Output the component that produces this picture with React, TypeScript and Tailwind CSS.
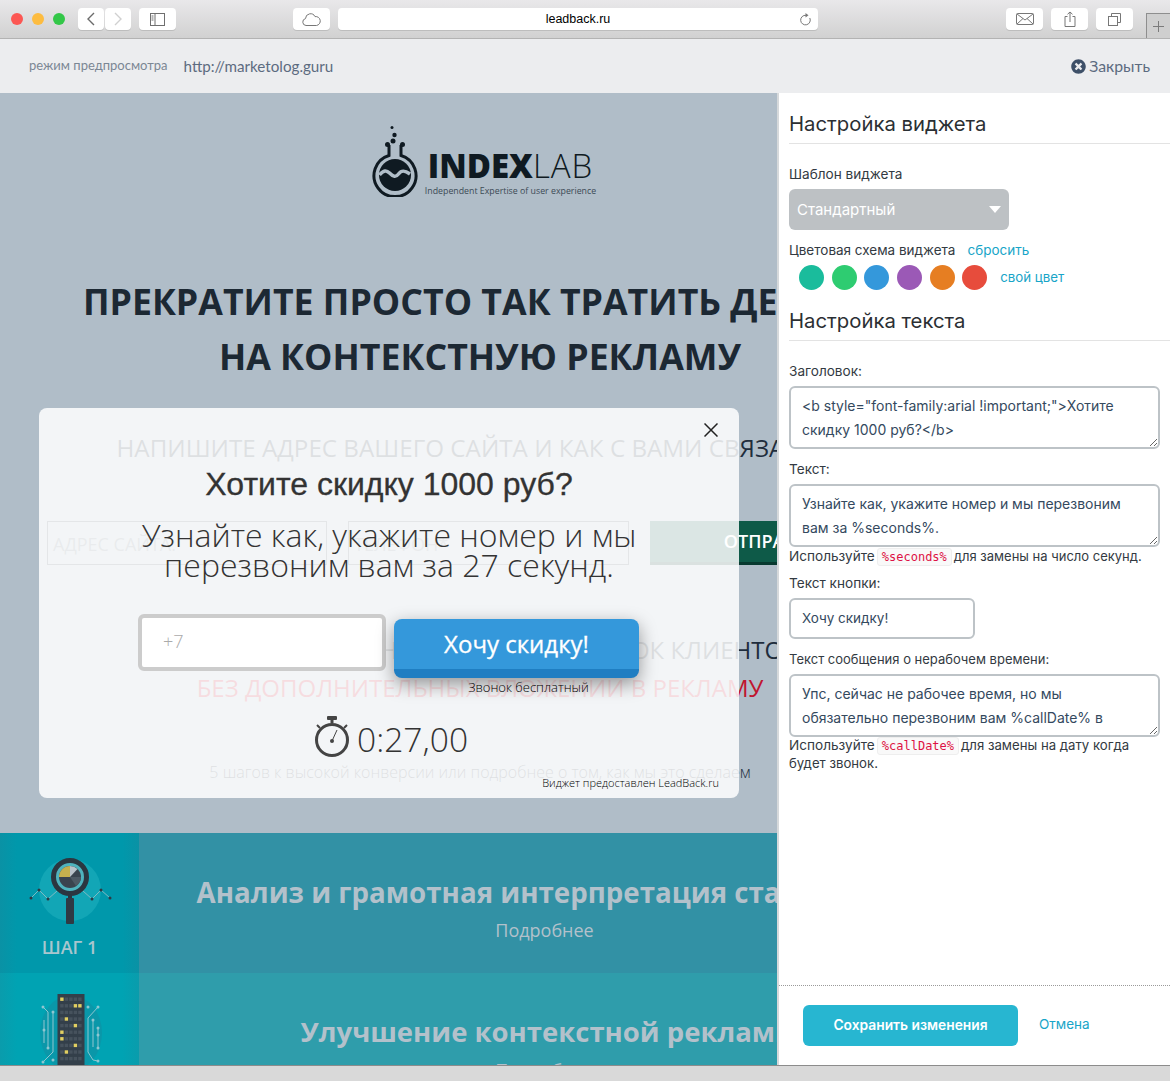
import { FaTimesCircle } from "react-icons/fa";

const swatches = ["bg-[#1abc9c]", "bg-[#2ecc71]", "bg-[#3498db]", "bg-[#9b59b6]", "bg-[#e67e22]", "bg-[#e74c3c]"];

function ToolButton({ className, children }: any) {
  return (
    <div className={`h-[22px] flex items-center justify-center bg-white rounded-[4px] shadow-[0_1px_0_#bdbdbd] ${className}`}>
      {children}
    </div>
  );
}

function Toolbar() {
  return (
    <div className="relative h-[39px] shrink-0 flex items-start pt-[8px] border-b border-[#b3b3b3] bg-gradient-to-b from-[#e9e8ea] to-[#d1d1d1]">
      <div className="flex gap-[9px] ml-[11px] mt-[5px] mr-[13px]">
        <div className="w-[12px] h-[12px] rounded-full bg-[#fc5753]" />
        <div className="w-[12px] h-[12px] rounded-full bg-[#fdbc40]" />
        <div className="w-[12px] h-[12px] rounded-full bg-[#33c748]" />
      </div>
      <ToolButton className="w-[26px]">
        <svg width="10" height="14" viewBox="0 0 10 14" fill="none" stroke="#6b6b6b" strokeWidth="1.4">
          <path d="M8 1L2 7l6 6" />
        </svg>
      </ToolButton>
      <ToolButton className="w-[26px] ml-[1px]">
        <svg width="10" height="14" viewBox="0 0 10 14" fill="none" stroke="#d0d0d0" strokeWidth="1.4">
          <path d="M2 1l6 6-6 6" />
        </svg>
      </ToolButton>
      <ToolButton className="w-[37px] ml-[8px]">
        <svg width="15" height="13" viewBox="0 0 15 13" fill="none" stroke="#6f6f6f">
          <rect x="0.5" y="0.5" width="14" height="12" />
          <path d="M5 0.5v12M1.5 3h2M1.5 5h2M1.5 7h2" />
        </svg>
      </ToolButton>
      <ToolButton className="w-[37px] ml-[117px]">
        <svg width="19" height="13" viewBox="0 0 19 13" fill="none" stroke="#777">
          <path d="M5 12.5H4a3.5 3.5 0 0 1-.5-6.9A5 5 0 0 1 13 3.6a4.5 4.5 0 0 1 1.5 8.9z" />
        </svg>
      </ToolButton>
      <ToolButton className="w-[480px] ml-[8px] relative">
        <span className="font-['Liberation_Sans',sans-serif] text-[12.5px] text-black">leadback.ru</span>
        <svg className="absolute right-[7px] top-[5px]" width="12" height="13" viewBox="0 0 12 13" fill="none" stroke="#777">
          <path d="M7 2.3a4.8 4.8 0 1 0 3.8 2.7" />
          <path d="M6.5 0l3 2.3-3 2.2z" fill="#777" stroke="none" />
        </svg>
      </ToolButton>
      <ToolButton className="w-[37px] ml-[188px]">
        <svg width="18" height="12" viewBox="0 0 18 12" fill="none" stroke="#777">
          <rect x="0.5" y="0.5" width="17" height="11" rx="1" />
          <path d="M1 1l8 6 8-6M1 11l6-5.5M17 11l-6-5.5" />
        </svg>
      </ToolButton>
      <ToolButton className="w-[37px] ml-[8px]">
        <svg width="12" height="16" viewBox="0 0 12 16" fill="none" stroke="#777">
          <path d="M3.5 5.5H1v10h10v-10H8.5M6 11V1M3.5 3.3L6 1l2.5 2.3" />
        </svg>
      </ToolButton>
      <ToolButton className="w-[37px] ml-[8px]">
        <svg width="13" height="13" viewBox="0 0 13 13" fill="none" stroke="#777">
          <rect x="0.5" y="3.5" width="9" height="9" />
          <path d="M3.5 3.5v-3h9v9h-3" />
        </svg>
      </ToolButton>
      <div className="absolute right-0 bottom-0 w-[24px] h-[25px] border-l border-t border-[#8e8e8e] bg-[#cfcfcf] flex items-center justify-center">
        <svg width="11" height="11" viewBox="0 0 11 11" stroke="#7b7b7b">
          <path d="M5.5 0v11M0 5.5h11" />
        </svg>
      </div>
    </div>
  );
}

function PreviewBar() {
  return (
    <div className="h-[54px] shrink-0 flex items-center bg-[#ecedef] px-[20px] font-['Lato',sans-serif]">
      <span className="ml-[9px] text-[13px] text-[#7b8794]">режим предпросмотра</span>
      <span className="ml-[16px] text-[15.2px] text-[#5c6b80]">http://marketolog.guru</span>
      <div className="ml-auto flex items-center gap-[3px] text-[15.8px] text-[#5c6b80]">
        <FaTimesCircle className="text-[15px] text-[#3e5068]" />
        Закрыть
      </div>
    </div>
  );
}

function Logo() {
  return (
    <div className="flex items-end justify-center h-[72px] ml-[8px]">
      <svg width="46" height="72" viewBox="0 0 46 72" fill="none" className="mr-[7px]">
        <circle cx="20" cy="2.5" r="1.5" fill="#0f1a22" />
        <circle cx="22.5" cy="10" r="2.2" fill="#0f1a22" />
        <circle cx="21" cy="16" r="2.5" fill="#0f1a22" />
        <path d="M17 20v10.5a21 21 0 1 0 12 0V20" stroke="#0f1a22" strokeWidth="3" />
        <circle cx="15.5" cy="19.5" r="2.5" fill="#0f1a22" />
        <circle cx="30.5" cy="19.5" r="2.5" fill="#0f1a22" />
        <circle cx="23" cy="50" r="16" fill="#0f1a22" />
        <path d="M7.5 50c4-5 7-5 10-2s6 5 9 1 6-4 11.5 0" stroke="#b0bdc8" strokeWidth="3.5" />
      </svg>
      <div className="font-['Open_Sans',sans-serif] text-[#0f1a22]">
        <div className="text-[33px] leading-[36px] font-extrabold mb-[1px]">
          INDEX<span className="font-light tracking-[1px]">LAB</span>
        </div>
        <div className="text-[8.8px] leading-[12px] text-[#3c4a55]">Independent Expertise of user experience</div>
      </div>
    </div>
  );
}

function StepOneIcon() {
  return (
    <svg width="139" height="100" viewBox="0 0 139 100" fill="none">
      <circle cx="70" cy="57" r="31" fill="#12a6b6" />
      <path d="M31 65l8-8 9 9 9-8M83 58l9 8 9-9 9 8" stroke="#7fb9c2" />
      <g fill="#2f3a44">
        <circle cx="31" cy="65" r="1.5" />
        <circle cx="39" cy="57" r="1.5" />
        <circle cx="48" cy="66" r="1.5" />
        <circle cx="92" cy="66" r="1.5" />
        <circle cx="101" cy="57" r="1.5" />
        <circle cx="110" cy="65" r="1.5" />
      </g>
      <circle cx="70" cy="44" r="16.5" fill="#4fb3be" stroke="#2b3640" strokeWidth="5" />
      <circle cx="70" cy="44" r="11" fill="#3a444f" />
      <path d="M70 44L59 44a11 11 0 0 1 11-11z" fill="#c5b04e" />
      <path d="M70 44V33a11 11 0 0 1 7.5 3z" fill="#b9c2ca" />
      <path d="M70 44l11 0a11 11 0 0 1-5 9z" fill="#4d5964" />
      <rect x="68" y="61" width="4" height="4" fill="#2b3640" />
      <rect x="66" y="65" width="8" height="26" rx="1" fill="#2f3a44" />
    </svg>
  );
}

const litCells = ["0-0", "1-3", "1-4", "3-1", "4-3", "5-0", "6-0", "7-3", "8-1"];

function ServerIcon() {
  return (
    <svg width="139" height="92" viewBox="0 0 139 92" fill="none">
      <ellipse cx="71" cy="60" rx="31" ry="38" fill="#0a97a9" />
      <path d="M43 34l5 5v36M53 39v40L43 89M44 47v23" stroke="#8fc6d0" />
      <path d="M98 34L88 45v34l5 8 5 1M93 47v27M98 55v20" stroke="#8fc6d0" />
      <g fill="#8fc6d0">
        <circle cx="43" cy="34" r="1.5" />
        <circle cx="53" cy="39" r="1.5" />
        <circle cx="44" cy="57" r="1.5" />
        <circle cx="48" cy="75" r="1.5" />
        <circle cx="53" cy="87" r="1.5" />
        <circle cx="43" cy="89" r="1.5" />
        <circle cx="88" cy="34" r="1.5" />
        <circle cx="98" cy="34" r="1.5" />
        <circle cx="93" cy="47" r="1.5" />
        <circle cx="98" cy="55" r="1.5" />
        <circle cx="98" cy="62" r="1.5" />
        <circle cx="98" cy="75" r="1.5" />
        <circle cx="98" cy="88" r="1.5" />
      </g>
      <rect x="57.5" y="21" width="27" height="71" fill="#333f4a" />
      {Array.from({ length: 10 }).map((_, r) =>
        Array.from({ length: 5 }).map((_, c) => (
          <rect
            key={`${r}-${c}`}
            x={60.2 + c * 4.5}
            y={24.5 + r * 6.6}
            width="3.4"
            height="3.4"
            fill={litCells.includes(`${r}-${c}`) ? "#e1cf62" : "#46525d"}
          />
        ))
      )}
    </svg>
  );
}

function BackgroundPage() {
  return (
    <div className="w-[960px] font-['Open_Sans',sans-serif] text-[#1f2d3d] text-center">
      <div className="pt-[32px]">
        <Logo />
      </div>
      <h1 className="mt-[77px] text-[35.7px] leading-[55px] font-bold text-[#1c2833]">
        ПРЕКРАТИТЕ ПРОСТО ТАК ТРАТИТЬ ДЕНЬГИ
        <br />
        НА КОНТЕКСТНУЮ РЕКЛАМУ
      </h1>
      <p className="mt-[47px] text-[24.2px] leading-[34px]">НАПИШИТЕ АДРЕС ВАШЕГО САЙТА И КАК С ВАМИ СВЯЗАТЬСЯ</p>
      <div className="mt-[56px] flex pl-[47px] gap-[21px] h-[44px]">
        <div className="w-[280px] border border-[#4b5a66] text-left pl-[5px] text-[18px] leading-[44px] text-[#6c7a85]">АДРЕС САЙТА:</div>
        <div className="w-[281px] border border-[#4b5a66] text-left pl-[5px] text-[18px] leading-[44px] text-[#6c7a85]">ТЕЛЕФОН*</div>
        <div className="w-[260px] pr-[4px] bg-[#0e5a48] border-b-[3px] border-[#083a30] text-white font-semibold text-[18px] leading-[41px]">ОТПРАВИТЬ</div>
      </div>
      <p className="mt-[66px] text-[24px] leading-[38px]">МЫ ГАРАНТИРОВАННО УВЕЛИЧИМ ПОТОК КЛИЕНТОВ</p>
      <p className="text-[24px] leading-[38px] text-[#c0152f]">БЕЗ ДОПОЛНИТЕЛЬНЫХ ВЛОЖЕНИЙ В РЕКЛАМУ</p>
      <p className="mt-[53px] text-[16px] leading-[24px] font-light">5 шагов к высокой конверсии или подробнее о том, как мы это сделаем</p>
      <div className="mt-[49px] flex h-[140px] bg-[#3291a5] text-[#b3c1cb]">
        <div className="w-[139px] shrink-0 bg-[linear-gradient(90deg,#0a92a5,#0098ab_12%,#0098ab_88%,#0a92a5)]">
          <StepOneIcon />
          <div className="mt-[2px] text-[18px] leading-[24px] font-semibold text-[#a9c6ce]">ШАГ 1</div>
        </div>
        <div className="flex-1 pt-[39px]">
          <div className="text-[27.7px] leading-[40px] font-bold">Анализ и грамотная интерпретация статистики</div>
          <div className="text-[18px] leading-[26px] font-medium mt-[5px] pr-[10px]">Подробнее</div>
        </div>
      </div>
      <div className="flex h-[140px] bg-[#2f9dab] text-[#b3c1cb]">
        <div className="w-[139px] shrink-0 bg-[linear-gradient(90deg,#0a9cac,#00a3b3_12%,#00a3b3_88%,#0a9cac)]">
          <ServerIcon />
        </div>
        <div className="flex-1 pt-[39px]">
          <div className="text-[27.5px] leading-[40px] font-bold">Улучшение контекстной рекламы</div>
          <div className="text-[18px] leading-[26px] font-medium mt-[5px] pr-[10px]">Подробнее</div>
        </div>
      </div>
    </div>
  );
}

function Stopwatch() {
  return (
    <svg width="36" height="42" viewBox="0 0 36 42" fill="none">
      <rect x="13" y="0" width="10" height="4" rx="1" fill="#444" />
      <rect x="16.5" y="3" width="3" height="4" fill="#444" />
      <path d="M3 9l3 3M33 9l-3 3" stroke="#444" strokeWidth="2" />
      <circle cx="18" cy="24" r="15.5" stroke="#444" strokeWidth="3" />
      <path d="M18 25l5-11" stroke="#444" />
      <circle cx="18" cy="25" r="2" fill="#444" />
    </svg>
  );
}

function Popup() {
  return (
    <div className="absolute left-[39px] top-[315px] w-[700px] h-[390px] rounded-[8px] bg-white/85 font-['Open_Sans',sans-serif] text-[#333]">
      <svg className="absolute right-[21px] top-[15px]" width="14" height="14" viewBox="0 0 14 14" stroke="#222" strokeWidth="1.5">
        <path d="M0.5 0.5l13 13M13.5 0.5l-13 13" />
      </svg>
      <div className="pt-[57px] text-center font-['Liberation_Sans',sans-serif] text-[32px] leading-[38px] [-webkit-text-stroke:0.3px_#333]">Хотите скидку 1000 руб?</div>
      <div className="mt-[17px] text-center text-[32px] leading-[30px] font-light">
        Узнайте как, укажите номер и мы
        <br />
        перезвоним вам за 27 секунд.
      </div>
      <div className="mt-[34px] ml-[99px] flex items-start gap-[8px]">
        <div className="w-[248px] h-[57px] bg-white border-[4px] border-[#ccc] rounded-[6px] pl-[21px] pt-[11px] text-[18px] leading-[24px] font-light text-[#aaa]">+7</div>
        <div className="relative mt-[5px]">
          <div className="w-[245px] h-[59px] bg-[#3498db] border-b-[9px] border-[#1f7ec2] rounded-[8px] shadow-[0_6px_18px_rgba(0,0,0,0.4)] flex items-center justify-center text-white text-[24px] [-webkit-text-stroke:0.3px_#fff]">
            Хочу скидку!
          </div>
          <div className="absolute left-[24px] right-0 top-[60px] text-center text-[13px] leading-[16px] font-light text-black">Звонок бесплатный</div>
        </div>
      </div>
      <div className="mt-[35px] ml-[275px] flex items-center gap-[7px]">
        <Stopwatch />
        <span className="mt-[5px] text-[33.6px] leading-[42px] font-light">0:27,00</span>
      </div>
      <div className="absolute right-[20px] bottom-[7px] text-[11px] leading-[16px] font-light text-black">Виджет предоставлен LeadBack.ru</div>
    </div>
  );
}

function FieldLabel({ children, className = "" }: any) {
  return <div className={`text-[13.6px] leading-[20px] text-[#333a42] ${className}`}>{children}</div>;
}

function Area({ value, className = "" }: any) {
  return (
    <textarea
      readOnly
      defaultValue={value}
      className={`block w-[371px] h-[63px] border-2 border-[#bdc3c7] rounded-[6px] px-[11px] py-[6px] text-[14px] leading-[24px] text-[#34495e] overflow-hidden resize bg-white outline-none ${className}`}
    />
  );
}

function Code({ children }: any) {
  return (
    <code className="inline-block font-['DejaVu_Sans_Mono',monospace] text-[12px] leading-[16px] px-[4px] mx-[2px] bg-[#f9f9f9] border border-[#eee] rounded-[3px] text-[#dd1144]">
      {children}
    </code>
  );
}

function SettingsPanel() {
  return (
    <div className="w-[393px] shrink-0 flex flex-col bg-white border-l-2 border-[#d6d9db] font-['Inter',sans-serif] text-[#333a42]">
      <div className="flex-1 pl-[10px]">
        <h2 className="pt-[17px] pb-[6px] text-[20.3px] leading-[27px] text-[#2b2f33] border-b border-[#e3e3e3]">Настройка виджета</h2>
        <FieldLabel className="mt-[20px]">Шаблон виджета</FieldLabel>
        <div className="mt-[5px] w-[220px] h-[41px] bg-[#bdc1c4] rounded-[6px] flex items-center justify-between pl-[8px] pr-[8px] text-white text-[15px]">
          <span className="mt-[2px]">Стандартный</span>
          <div className="w-0 h-0 border-l-[6px] border-r-[6px] border-t-[7px] border-l-transparent border-r-transparent border-t-white" />
        </div>
        <div className="mt-[10px] flex gap-[12px] text-[13.5px] leading-[20px]">
          <span>Цветовая схема виджета</span>
          <span className="text-[#18a5c8]">сбросить</span>
        </div>
        <div className="mt-[5px] ml-[10px] flex items-center gap-[7.7px] h-[25px]">
          {swatches.map((c) => (
            <div key={c} className={`w-[25px] h-[25px] rounded-full ${c}`} />
          ))}
          <span className="ml-[5px] text-[13.3px] text-[#18a5c8]">свой цвет</span>
        </div>
        <h2 className="mt-[17px] pb-[6px] text-[20.3px] leading-[27px] text-[#2b2f33] border-b border-[#e3e3e3]">Настройка текста</h2>
        <FieldLabel className="mt-[20px]">Заголовок:</FieldLabel>
        <Area className="mt-[5px]" value={'<b style="font-family:arial !important;">Хотите скидку 1000 руб?</b>'} />
        <FieldLabel className="mt-[10px]">Текст:</FieldLabel>
        <Area className="mt-[5px]" value="Узнайте как, укажите номер и мы перезвоним вам за %seconds%." />
        <div className="h-[18px] text-[13.6px] leading-[18px]">
          Используйте<Code>%seconds%</Code>
          <span className="text-[13px]">для замены на число секунд.</span>
        </div>
        <FieldLabel className="mt-[8px]">Текст кнопки:</FieldLabel>
        <div className="mt-[5px] w-[186px] h-[41px] border-2 border-[#bdc3c7] rounded-[6px] pl-[11px] text-[13.5px] leading-[37px] text-[#34495e]">Хочу скидку!</div>
        <FieldLabel className="mt-[10px]">
          <span className="text-[13px]">Текст сообщения о нерабочем времени:</span>
        </FieldLabel>
        <Area className="mt-[5px]" value="Упс, сейчас не рабочее время, но мы обязательно перезвоним вам %callDate% в ближайшее рабочее время." />
        <div className="text-[13.6px] leading-[17px] w-[360px]">
          Используйте<Code>%callDate%</Code>
          <span className="text-[13.2px]">для замены на дату когда будет звонок.</span>
        </div>
      </div>
      <div className="h-[80px] border-t border-dotted border-[#9a9a9a] flex items-start pl-[24px] pt-[19px]">
        <div className="w-[215px] h-[41px] rounded-[6px] bg-[#27b6d1] flex items-center justify-center text-white text-[13.8px] font-semibold">
          Сохранить изменения
        </div>
        <span className="ml-[21px] mt-[9px] text-[13.5px] leading-[20px] text-[#18a5c8]">Отмена</span>
      </div>
    </div>
  );
}

export default function App() {
  return (
    <div className="h-[1081px] w-[1170px] flex flex-col overflow-hidden">
      <Toolbar />
      <PreviewBar />
      <div className="flex flex-1 min-h-0">
        <div className="relative w-[777px] overflow-hidden bg-[#b0bdc8]">
          <BackgroundPage />
          <Popup />
        </div>
        <SettingsPanel />
      </div>
      <div className="h-[16px] shrink-0 bg-[#d9d9d9] border-t border-[#8c8c8c]" />
    </div>
  );
}
